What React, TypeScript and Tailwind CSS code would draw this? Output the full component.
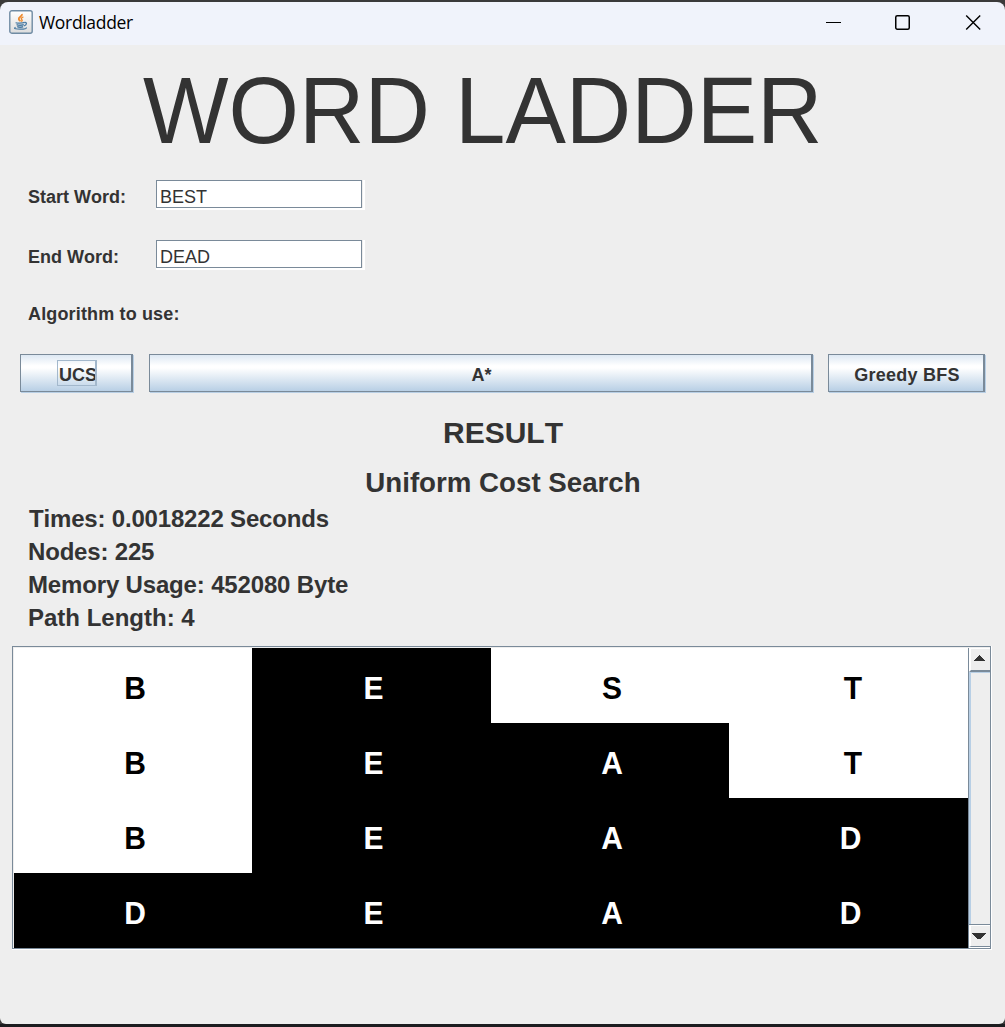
import type { ReactNode } from "react";

const rows: [string, boolean][][] = [
  [["B", false], ["E", true], ["S", false], ["T", false]],
  [["B", false], ["E", true], ["A", true], ["T", false]],
  [["B", false], ["E", true], ["A", true], ["D", true]],
  [["D", true], ["E", true], ["A", true], ["D", true]],
];

const stats = [
  { text: "Times: 0.0018222 Seconds", style: "pl-px tracking-[-0.18px]" },
  { text: "Nodes: 225", style: "tracking-[-0.18px]" },
  { text: "Memory Usage: 452080 Byte", style: "tracking-[-0.16px]" },
  { text: "Path Length: 4", style: "" },
];

function JavaIcon() {
  return (
    <svg width="24" height="24" viewBox="0 0 24 24" fill="none">
      <defs>
        <linearGradient id="plate" x1="0" y1="0" x2="0" y2="1">
          <stop offset="0" stopColor="#ffffff" />
          <stop offset="1" stopColor="#dcdcdc" />
        </linearGradient>
      </defs>
      <rect x="0.8" y="0.8" width="22.4" height="22.4" rx="2" fill="url(#plate)" stroke="#6f8ba3" strokeWidth="1.4" />
      <path d="M13 4c.6 2.200-4 3.200-3.200 5.200.3.900 1.300 1.400 1.400 2.200" stroke="#ee8a2c" strokeWidth="1.8" />
      <path d="M14.400 6.800c-2.600 1-2.400 2-1.500 3 .5.700.1 1.300-.6 1.800" stroke="#ee8a2c" strokeWidth="1.400" />
      <path d="M6.800 12.400c.4 1 7 .8 8.600 0M7.600 14.500c1 1 6 .9 7.200.2M8.200 16.500c1 .9 4.800.9 6 .2" stroke="#4a7ba2" strokeWidth="1.400" />
      <path d="M15.200 12.600c3-.8 3 2.400-.1 3.200" stroke="#4a7ba2" strokeWidth="1.300" />
      <path d="M6.600 17.300c-3 1.200 1 2 5.200 1.900 3.500 0 6.500-.8 5-1.600" stroke="#4a7ba2" strokeWidth="1.200" />
    </svg>
  );
}

function TitleBar() {
  return (
    <div className="mt-[2px] flex h-[43px] shrink-0 rounded-t-[8px] bg-[#f0f3fb]">
      <div className="ml-[9px] mt-[8px] h-6 w-6">
        <JavaIcon />
      </div>
      <span className="ml-[6px] mt-[7px] font-['Open_Sans','Noto_Sans',sans-serif] text-[17.5px] leading-[26px] tracking-[-0.32px] text-black">
        Wordladder
      </span>
      <div className="ml-auto mr-[23px] mt-[11px] flex gap-[52px]">
        <svg width="18" height="18" viewBox="0 0 18 18">
          <path d="M2 9.500h15" stroke="#000" />
        </svg>
        <svg width="18" height="18" viewBox="0 0 18 18" fill="none">
          <rect x="1.750" y="2.750" width="13.500" height="13.500" rx="1.500" stroke="#000" strokeWidth="1.500" />
        </svg>
        <svg width="18" height="18" viewBox="0 0 18 18">
          <path d="M2.200 2.500l14 14M16.200 2.500l-14 14" stroke="#000" strokeWidth="1.400" />
        </svg>
      </div>
    </div>
  );
}

function Field({ label, value }: { label: string; value: string }) {
  return (
    <div className="flex h-[30px]">
      <label className="w-[128px] pt-[6px] text-[18px] font-bold leading-[22px]">{label}</label>
      <div className="h-[30px] w-[209px] border-b-2 border-r-2 border-white">
        <div className="mr-px h-[28px] border border-[#7a8a99] bg-white pl-[3px] pt-[5px] text-[18px] leading-[22px]">
          {value}
        </div>
      </div>
    </div>
  );
}

function Button({ className, children }: { className: string; children: ReactNode }) {
  return (
    <button
      className={`flex h-[38px] items-center justify-center border border-r-2 border-[#7a8a99] bg-linear-[to_bottom,#dde8f3_0%,#ffffff_30%,#ffffff_36%,#b8cfe5_100%] pt-[3px] text-[18px] font-bold leading-[22px] shadow-[1px_1px_0_#b8cfe5] ${className}`}
    >
      {children}
    </button>
  );
}

function ScrollBar() {
  return (
    <div className="flex w-[23px] flex-col border-l border-[#7a8a99] bg-[#eeeeee]">
      <div className="flex h-[24px] shrink-0 justify-center border-b-2 border-l-2 border-t border-b-[#7a8a99] border-l-white border-t-white pt-[6px]">
        <svg width="12" height="7" viewBox="0 0 12 7" shapeRendering="crispEdges" className="-ml-[3px]">
          <path d="M6 0L12 6H0z" fill="#333" />
        </svg>
      </div>
      <div className="flex-1 border-l-2 border-t border-[#b8cfe5]" />
      <div className="h-px bg-[#7a8a99]" />
      <div className="flex h-[22px] shrink-0 justify-center border-b border-l-2 border-t border-b-[#7a8a99] border-l-white border-t-white pt-[7px]">
        <svg width="14" height="7" viewBox="0 0 14 7" shapeRendering="crispEdges" className="-ml-[3px]">
          <path d="M0 0h14v1L8.500 6h-3L0 1z" fill="#333" />
        </svg>
      </div>
      <div className="h-px bg-white" />
    </div>
  );
}

export default function App() {
  return (
    <div className="flex h-[1027px] w-[1005px] flex-col overflow-hidden bg-[#3a3a3a] font-['Liberation_Sans',Arial,sans-serif] text-[#333333] [font-kerning:none]">
      <TitleBar />
      <main className="flex h-[979px] flex-col rounded-b-[6px] bg-[#eeeeee]">
        <h1 className="ml-[143px] mt-[15px] h-[104px] origin-[0_83px] scale-y-[1.035] whitespace-nowrap text-[90.600px] leading-[104px]">
          WORD LADDER
        </h1>
        <div className="ml-[28px] mt-[16px] flex flex-col gap-[30px]">
          <Field label="Start Word:" value="BEST" />
          <Field label="End Word:" value="DEAD" />
        </div>
        <p className="ml-[28px] mt-[33px] text-[18px] font-bold leading-[22px] tracking-[0.15px]">Algorithm to use:</p>
        <div className="ml-[20px] mt-[29px] flex gap-[16px]">
          <Button className="w-[113px]">
            <span className="-mt-[3px] ml-[2px] h-[26px] w-[40px] overflow-hidden border border-r-2 border-[#a3b8cc] pl-px pt-[3px] text-left">
              UCS
            </span>
          </Button>
          <Button className="w-[664px] pl-[2px]">A*</Button>
          <Button className="-ml-px w-[157px] pl-[2px] tracking-[0.24px]">Greedy BFS</Button>
        </div>
        <h2 className="mt-[23px] pl-px text-center text-[30px] font-bold leading-[36px]">RESULT</h2>
        <h3 className="mt-[16px] pl-px text-center text-[27.700px] font-bold leading-[32px]">Uniform Cost Search</h3>
        <div className="ml-[28px] mt-[3px]">
          {stats.map(({ text, style }) => (
            <p key={text} className={`text-[24px] font-bold leading-[33px] ${style}`}>
              {text}
            </p>
          ))}
        </div>
        <div className="ml-[12px] mt-[12px] w-[980px] border-b border-r border-white">
          <div className="flex h-[303px] border border-[#7a8a99] pl-px pt-px">
            <div className="grid w-[954px] shrink-0 grid-rows-4">
              {rows.map((row, i) => (
                <div key={i} className="grid h-[75px] grid-cols-[238px_239px_238px_239px]">
                  {row.map(([letter, match], j) => (
                    <div
                      key={j}
                      className={`flex items-center justify-center pt-[7px] text-[30px] font-bold leading-[34px] ${
                        match ? "bg-black text-white" : "bg-white text-black"
                      } ${letter === "T" ? "pl-[9px]" : "pl-[4px]"}`}
                    >
                      <span className="origin-[50%_28px] scale-y-[1.06]">{letter}</span>
                    </div>
                  ))}
                </div>
              ))}
            </div>
            <ScrollBar />
          </div>
        </div>
      </main>
      <div className="h-[3px] bg-[#1c1c1f]" />
    </div>
  );
}
